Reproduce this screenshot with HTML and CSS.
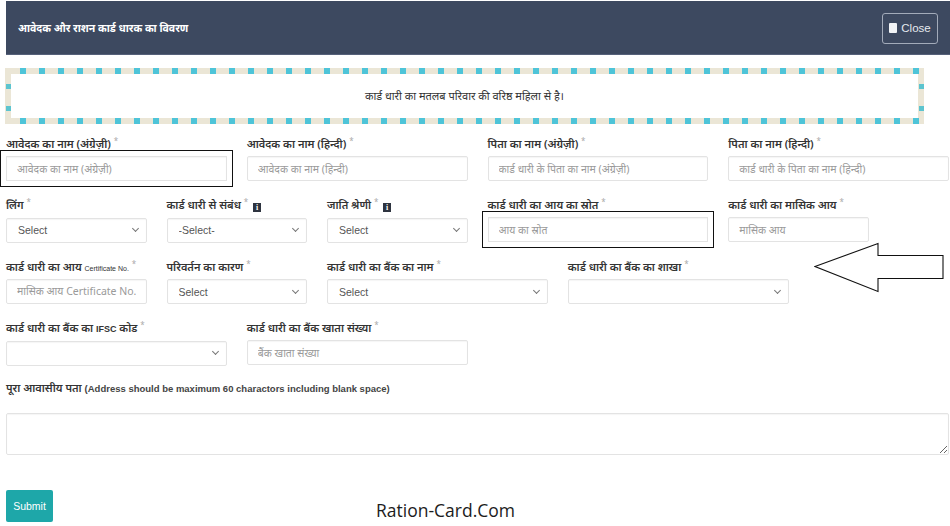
FILE: index.html
```html
<!DOCTYPE html>
<html lang="hi">
<head>
<meta charset="utf-8">
<title>आवेदक और राशन कार्ड धारक का विवरण</title>
<link rel="stylesheet" href="styles.css">
</head>
<body>
<div class="page">
  <header class="panel-head">
    <h1 class="panel-title">आवेदक और राशन कार्ड धारक का विवरण</h1>
    <button class="close-btn" type="button"><span class="close-ico"></span>Close</button>
  </header>

  <div class="notice">
    <div class="notice-inner">कार्ड धारी का मतलब परिवार की वरिष्ठ महिला से है।</div>
  </div>

  <form class="form-grid">
    <div class="field c3">
      <label class="lbl">आवेदक का नाम (अंग्रेज़ी) <sup>*</sup></label>
      <input class="ctl marked" type="text" placeholder="आवेदक का नाम (अंग्रेज़ी)">
    </div>
    <div class="field c3">
      <label class="lbl">आवेदक का नाम (हिन्दी) <sup>*</sup></label>
      <input class="ctl" type="text" placeholder="आवेदक का नाम (हिन्दी)">
    </div>
    <div class="field c3">
      <label class="lbl">पिता का नाम (अंग्रेज़ी) <sup>*</sup></label>
      <input class="ctl" type="text" placeholder="कार्ड धारी के पिता का नाम (अंग्रेज़ी)">
    </div>
    <div class="field c3">
      <label class="lbl">पिता का नाम (हिन्दी) <sup>*</sup></label>
      <input class="ctl" type="text" placeholder="कार्ड धारी के पिता का नाम (हिन्दी)">
    </div>

    <div class="field c2">
      <label class="lbl">लिंग <sup>*</sup></label>
      <div class="sel"><select class="ctl"><option>Select</option></select></div>
    </div>
    <div class="field c2">
      <label class="lbl">कार्ड धारी से संबंध <sup>*</sup> <span class="info">i</span></label>
      <div class="sel"><select class="ctl"><option>-Select-</option></select></div>
    </div>
    <div class="field c2">
      <label class="lbl">जाति श्रेणी <sup>*</sup> <span class="info">i</span></label>
      <div class="sel"><select class="ctl"><option>Select</option></select></div>
    </div>
    <div class="field c3">
      <label class="lbl">कार्ड धारी का आय का स्रोत <sup>*</sup></label>
      <input class="ctl marked" type="text" placeholder="आय का स्रोत">
    </div>
    <div class="field c2">
      <label class="lbl">कार्ड धारी का मासिक आय <sup>*</sup></label>
      <input class="ctl" type="text" placeholder="मासिक आय">
    </div>
    <div class="field c1"></div>

    <div class="field c2">
      <label class="lbl">कार्ड धारी का आय <small>Certificate No.</small> <sup>*</sup></label>
      <input class="ctl" type="text" placeholder="मासिक आय Certificate No.">
    </div>
    <div class="field c2">
      <label class="lbl">परिवर्तन का कारण <sup>*</sup></label>
      <div class="sel"><select class="ctl"><option>Select</option></select></div>
    </div>
    <div class="field c3">
      <label class="lbl">कार्ड धारी का बैंक का नाम <sup>*</sup></label>
      <div class="sel"><select class="ctl"><option>Select</option></select></div>
    </div>
    <div class="field c3">
      <label class="lbl">कार्ड धारी का बैंक का शाखा <sup>*</sup></label>
      <div class="sel"><select class="ctl"><option></option></select></div>
    </div>
    <div class="field c2"></div>

    <div class="field c3">
      <label class="lbl">कार्ड धारी का बैंक का <b class="en">IFSC</b> कोड <sup>*</sup></label>
      <div class="sel"><select class="ctl"><option></option></select></div>
    </div>
    <div class="field c3">
      <label class="lbl">कार्ड धारी का बैंक खाता संख्या <sup>*</sup></label>
      <input class="ctl" type="text" placeholder="बैंक खाता संख्या">
    </div>

    <div class="field c12 addr">
      <label class="lbl">पूरा आवासीय पता <span class="en-note">(Address should be maximum 60 charactors including blank space)</span></label>
      <textarea class="ctl area"></textarea>
    </div>

    <div class="c12 foot">
      <button class="submit" type="button">Submit</button>
      <span class="watermark">Ration-Card.Com</span>
    </div>
  </form>

  <svg class="arrow" width="132" height="52" viewBox="0 0 132 52" aria-hidden="true">
    <polygon points="1,24.5 64,1.5 64,13.5 129,13.5 129,36.5 64,36.5 64,49.5" fill="#fff" stroke="#111" stroke-width="1.1"/>
  </svg>
</div>
</body>
</html>
```
FILE: styles.css
```css
* { box-sizing: border-box; }

body {
  margin: 0;
  background: #fff;
  font-family: "Noto Sans", "Liberation Sans", sans-serif;
  color: #333;
}

.page {
  position: relative;
  width: 950px;
  height: 526px;
  overflow: hidden;
  padding-left: 6px;
  padding-top: 1px;
}

.panel-head {
  height: 54px;
  background: #3d4960;
  border-bottom: 1px solid #56617a;
  display: flex;
  align-items: center;
  justify-content: space-between;
  padding: 0 18px 0 12px;
  margin-right: -6px;
}

.panel-title {
  margin: 0;
  font-size: 10.5px;
  font-weight: 700;
  color: #fff;
}

.close-btn {
  height: 31px;
  width: 56px;
  margin-top: 1px;
  border: 1px solid #a3abba;
  border-radius: 3px;
  background: #3d4960;
  color: #e6e9ef;
  font-family: "Liberation Sans", Arial, sans-serif;
  font-size: 11.5px;
  display: flex;
  align-items: center;
  justify-content: center;
  gap: 4px;
  padding: 0;
}

.close-ico {
  width: 8px;
  height: 10px;
  background: #f2f4f7;
  border-radius: 1px;
}

.notice {
  margin: 13px 0 0 -1px;
  width: 919px;
  height: 56px;
  padding: 6px;
  background-color: #ebe6d6;
  background-image:
    repeating-linear-gradient(90deg, transparent 0 13px, #4ec4d8 13px 19px),
    repeating-linear-gradient(90deg, transparent 0 13px, #4ec4d8 13px 19px),
    repeating-linear-gradient(180deg, transparent 0 13px, #5cc4cf 13px 18px, transparent 18px 22px),
    repeating-linear-gradient(180deg, transparent 0 13px, #5cc4cf 13px 18px, transparent 18px 22px);
  background-size: 100% 6px, 100% 6px, 5px 100%, 5px 100%;
  background-position: 2px 0, 2px 100%, 0.5px 3px, calc(100% - 0.5px) 3px;
  background-repeat: no-repeat;
}

.notice-inner {
  height: 100%;
  background: #fff;
  display: flex;
  align-items: center;
  justify-content: center;
  font-size: 11px;
  color: #333;
  padding-bottom: 1px;
}

.form-grid {
  margin-top: 9px;
  display: grid;
  grid-template-columns: repeat(12, 60.25px);
  column-gap: 20px;
  row-gap: 13px;
}

.c1 { grid-column: span 1; }
.c2 { grid-column: span 2; }
.c3 { grid-column: span 3; }
.c12 { grid-column: span 12; }

.field {
  display: flex;
  flex-direction: column;
}

.lbl {
  height: 16px;
  line-height: 16px;
  margin-bottom: 7px;
  font-size: 11px;
  font-weight: 600;
  color: #333;
  white-space: nowrap;
}

.lbl sup {
  font-size: 8px;
  color: #aaa;
  font-weight: 400;
  vertical-align: 4px;
}

.lbl small {
  font-family: "Liberation Sans", Arial, sans-serif;
  font-size: 7px;
  font-weight: 400;
}

.lbl .en {
  font-family: "Liberation Sans", Arial, sans-serif;
  font-size: 9px;
  font-weight: 700;
}

.info {
  display: inline-block;
  width: 8px;
  height: 9px;
  background: #2e3440;
  color: #fff;
  font-family: "Liberation Serif", serif;
  font-size: 8px;
  font-weight: 700;
  line-height: 9px;
  text-align: center;
  vertical-align: -1px;
  margin-left: 2px;
}

.ctl {
  width: 100%;
  height: 25px;
  border: 1px solid #e3e3e3;
  border-radius: 2px;
  background: #fff;
  box-shadow: inset 0 1px 1px rgba(0,0,0,0.04);
  padding: 0 10px;
  font-family: "Noto Sans", "Liberation Sans", sans-serif;
  font-size: 10.5px;
  color: #555;
  outline: none;
}

.ctl::placeholder { color: #9a9a9a; }

.marked {
  border-radius: 0;
  outline: 1.5px solid #111;
  outline-offset: 5px;
}

.sel { position: relative; }

.sel select {
  appearance: none;
  -webkit-appearance: none;
  padding-left: 11px;
  font-family: "Liberation Sans", Arial, sans-serif;
  font-size: 10.5px;
  color: #555;
}

.sel::after {
  content: "";
  position: absolute;
  right: 9px;
  top: 9px;
  width: 4px;
  height: 4px;
  border-right: 1.2px solid #777;
  border-bottom: 1.2px solid #777;
  transform: rotate(45deg);
  pointer-events: none;
}

.addr { margin-top: 1px; }

.addr .lbl { margin-bottom: 17px; }

.en-note {
  font-family: "Liberation Sans", Arial, sans-serif;
  font-size: 9.5px;
  font-weight: 700;
  color: #444;
}

.area {
  width: 943px;
  height: 42px;
  resize: both;
}

.foot {
  display: flex;
  align-items: flex-end;
  margin-top: 22px;
}

.submit {
  width: 47px;
  height: 32px;
  border: none;
  border-radius: 2px;
  background: #1ea7a9;
  color: #fff;
  font-family: "Liberation Sans", Arial, sans-serif;
  font-size: 10.5px;
  padding: 0;
}

.watermark {
  margin-left: 323px;
  font-family: "Open Sans", sans-serif;
  font-size: 17.5px;
  color: #1c1c1c;
  line-height: 22px;
  margin-bottom: 1px;
}

.arrow {
  position: absolute;
  left: 814px;
  top: 242px;
}
```
